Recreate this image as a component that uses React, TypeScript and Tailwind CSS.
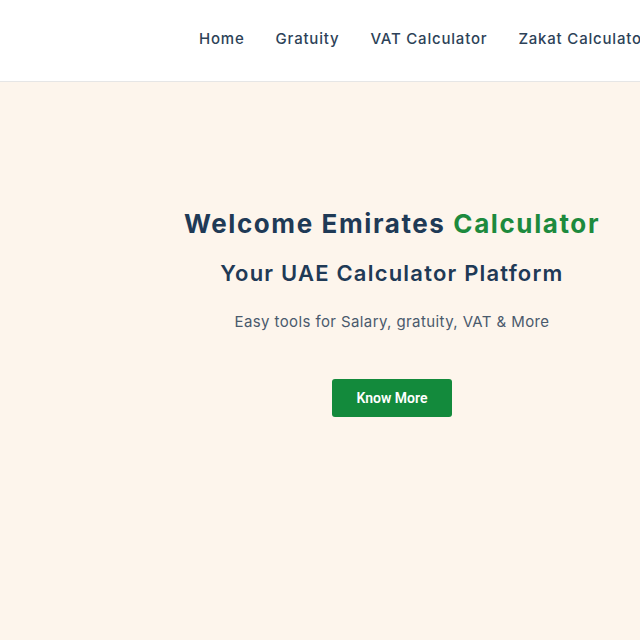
import React from "react";

export default function App() {
  const nav = ["Home", "Gratuity", "VAT Calculator", "Zakat Calculator"];
  return (
    <div className="w-[640px] h-[640px] overflow-hidden bg-[#fdf5ec]" style={{ fontFamily: "Inter, 'Open Sans', sans-serif" }}>
      <div className="w-[784px]">
        <header className="h-[82px] bg-white border-b border-[#e6e6e6] flex items-center pl-[199px]">
          <nav className="flex gap-[31px] text-[15px] tracking-[0.8px] font-medium text-[#2d4258] whitespace-nowrap -mt-[2px]">
            {nav.map((n) => (
              <span key={n}>{n}</span>
            ))}
          </nav>
        </header>
        <section className="flex flex-col items-center pt-[126px] text-center">
          <h1 className="text-[26px] leading-[31px] tracking-[1.6px] font-bold text-[#1f3a56]">
            Welcome Emirates <span className="text-[#1d8a3d]">Calculator</span>
          </h1>
          <h2 className="mt-[21px] text-[22px] leading-[27px] tracking-[1.2px] font-semibold text-[#1f3a56]">
            Your UAE Calculator Platform
          </h2>
          <p className="mt-[23px] text-[15px] leading-[23px] tracking-[0.4px] text-[#4a5a6c]">
            Easy tools for Salary, gratuity, VAT &amp; More
          </p>
          <button
            className="mt-[46px] w-[120px] h-[38px] rounded-[3px] bg-[#138a3c] text-white text-[14px] font-semibold"
            style={{ fontFamily: "Roboto, sans-serif" }}
          >
            Know More
          </button>
        </section>
      </div>
    </div>
  );
}
